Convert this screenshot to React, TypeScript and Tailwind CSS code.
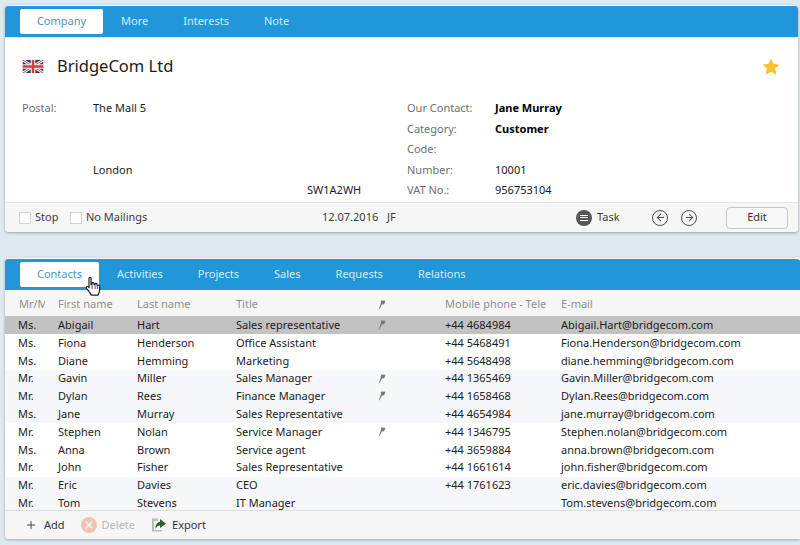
import { ArrowLeft, ArrowRight, Plus, X } from "lucide-react";

const contacts = [
  ["Ms.", "Abigail", "Hart", "Sales representative", true, "+44 4684984", "Abigail.Hart@bridgecom.com"],
  ["Ms.", "Fiona", "Henderson", "Office Assistant", false, "+44 5468491", "Fiona.Henderson@bridgecom.com"],
  ["Ms.", "Diane", "Hemming", "Marketing", false, "+44 5648498", "diane.hemming@bridgecom.com"],
  ["Mr.", "Gavin", "Miller", "Sales Manager", true, "+44 1365469", "Gavin.Miller@bridgecom.com"],
  ["Mr.", "Dylan", "Rees", "Finance Manager", true, "+44 1658468", "Dylan.Rees@bridgecom.com"],
  ["Ms.", "Jane", "Murray", "Sales Representative", false, "+44 4654984", "jane.murray@bridgecom.com"],
  ["Mr.", "Stephen", "Nolan", "Service Manager", true, "+44 1346795", "Stephen.nolan@bridgecom.com"],
  ["Ms.", "Anna", "Brown", "Service agent", false, "+44 3659884", "anna.brown@bridgecom.com"],
  ["Mr.", "John", "Fisher", "Sales Representative", false, "+44 1661614", "john.fisher@bridgecom.com"],
  ["Mr.", "Eric", "Davies", "CEO", false, "+44 1761623", "eric.davies@bridgecom.com"],
  ["Mr.", "Tom", "Stevens", "IT Manager", false, "", "Tom.stevens@bridgecom.com"],
] as const;

const PinIcon = () => (
  <svg viewBox="0 0 8 10" className="h-[10px] w-2">
    <path d="M3.2 0.5 L7.5 0.8 L6.2 4.2 L4 4.6 L1.2 9.5 L0.8 9.2 L2.6 4 Z" fill="#77797b" />
  </svg>
);

const Flag = () => (
  <svg viewBox="0 0 22 14" className="h-[13px] w-[22px]">
    <rect width="22" height="14" fill="#2b3a67" />
    <path d="M0 0 L22 14 M22 0 L0 14" stroke="#e8e8ee" strokeWidth="3" />
    <path d="M0 0 L22 14 M22 0 L0 14" stroke="#d8485a" strokeWidth="1" />
    <path d="M11 0 V14 M0 7 H22" stroke="#f2f2f5" strokeWidth="5" />
    <path d="M11 0 V14 M0 7 H22" stroke="#e2382f" strokeWidth="2.6" />
  </svg>
);

const Star = () => (
  <svg viewBox="0 0 16 16" className="h-4 w-4">
    <path
      d="M8 0.6 L10.2 5.4 L15.6 6 L11.6 9.5 L12.8 15 L8 12.2 L3.2 15 L4.4 9.5 L0.4 6 L5.8 5.4 Z"
      fill="#fbc02d"
      stroke="#fbc02d"
      strokeLinejoin="round"
    />
  </svg>
);

const Tabs = ({ items, activeWidth }: { items: string[]; activeWidth: number }) => (
  <div className="flex h-[31px] items-center rounded-t-[3px] bg-[#2196d8] pl-[15px]">
    <div
      className="mr-[18px] flex h-[25px] items-center justify-center rounded-[2px] bg-white text-[#4d96c0]"
      style={{ width: activeWidth }}
    >
      {items[0]}
    </div>
    <div className="flex gap-[35px]">
      {items.slice(1).map((item) => (
        <span key={item} className="text-[#d6ecf8]">
          {item}
        </span>
      ))}
    </div>
  </div>
);

const Field = ({ label, value, bold }: { label: string; value?: string; bold?: boolean }) => (
  <div className="flex h-[20.5px] items-center">
    <span className="w-[88px] text-[#6f6f6f]">{label}</span>
    <span className={bold ? "font-bold text-black" : "text-[#1c1c1c]"}>{value}</span>
  </div>
);

const Checkbox = ({ label, width }: { label: string; width: number }) => (
  <div className="flex items-center gap-[4px]" style={{ width }}>
    <span className="h-[12px] w-[12px] border border-[#d4d4d4] bg-white" />
    <span>{label}</span>
  </div>
);

const HandCursor = () => (
  <svg viewBox="0 0 16 20" className="absolute left-[80px] top-[18px] h-[21px] w-4">
    <path
      d="M4 1.8 C4 0.6 6 0.6 6 1.8 V8 L7 8 V6.8 C7 6 9 6 9 6.8 V8 L10 8.2 V7.4 C10 6.7 12 6.7 12 7.6 V8.6 L12.6 8.8 C13.3 8.4 14.6 8.8 14.6 9.8 V13.4 C14.6 15.4 13.6 16.4 13.2 18.6 H6.2 C5.6 16.6 3.6 14.6 1.6 12 C0.6 10.6 2 9.4 3.2 10.4 L4 11.2 Z"
      fill="white"
      stroke="#222"
      strokeWidth="1.2"
      strokeLinejoin="round"
    />
    <path d="M7 8.5 V12.5 M10 8.5 V12.5 M12.4 9 V12.5" stroke="#222" strokeWidth="0.8" />
  </svg>
);

const App = () => (
  <div
    className="flex h-[545px] w-[800px] flex-col overflow-hidden bg-[#dfe9f0] pl-[5px] pt-[5px] text-[11px] text-[#1c1c1c]"
    style={{ fontFamily: '"Noto Sans", sans-serif' }}
  >
    <div className="h-[227px] w-[793px] shrink-0 overflow-hidden rounded-[4px] bg-white pt-px shadow-[0_1px_3px_rgba(90,110,130,0.55)]">
      <Tabs items={["Company", "More", "Interests", "Note"]} activeWidth={83} />
      <div className="flex h-[165px] flex-col border-t border-[#dfe5ea]">
        <div className="flex h-[59px] items-center pb-[2px] pl-[17px] pr-[19px]">
          <Flag />
          <span className="ml-[13px] flex-1 pb-px text-[16.5px] text-[#1a1a1a]">BridgeCom Ltd</span>
          <Star />
        </div>
        <div className="flex pl-[17px] pt-[1px]">
          <div className="flex w-[385px] flex-col">
            <div className="flex h-[20.5px] items-center">
              <span className="w-[71px] text-[#6f6f6f]">Postal:</span>
              <span>The Mall 5</span>
            </div>
            <div className="h-[41px]" />
            <div className="flex h-[20.5px] items-center pl-[71px]">London</div>
            <div className="flex h-[20.5px] items-center pl-[285px]">SW1A2WH</div>
          </div>
          <div className="flex flex-col">
            <Field label="Our Contact:" value="Jane Murray" bold />
            <Field label="Category:" value="Customer" bold />
            <Field label="Code:" />
            <Field label="Number:" value="10001" />
            <Field label="VAT No.:" value="956753104" />
          </div>
        </div>
      </div>
      <div className="flex h-[30px] items-center border-t border-[#e6e6e6] bg-[#f6f6f6] pl-[14px] text-[#3c3c3c]">
        <Checkbox label="Stop" width={51} />
        <Checkbox label="No Mailings" width={252} />
        <span className="w-[65px]">12.07.2016</span>
        <span className="w-[189px]">JF</span>
        <span className="flex h-4 w-4 flex-col items-center justify-center gap-[1.5px] rounded-full bg-[#56565a]">
          <span className="h-px w-2 bg-white" />
          <span className="h-px w-2 bg-white" />
          <span className="h-px w-2 bg-white" />
        </span>
        <span className="ml-[5px] w-[55px]">Task</span>
        <span className="flex h-4 w-4 items-center justify-center rounded-full border-[1.5px] border-[#505050]">
          <ArrowLeft size={11} strokeWidth={2.2} color="#505050" />
        </span>
        <span className="ml-[13px] flex h-4 w-4 items-center justify-center rounded-full border-[1.5px] border-[#505050]">
          <ArrowRight size={11} strokeWidth={2.2} color="#505050" />
        </span>
        <button className="ml-[29px] h-[22px] w-[62px] rounded-[4px] border border-[#c8c8c8] bg-[#f8f8f8] text-[11px] text-[#333]">
          Edit
        </button>
      </div>
    </div>

    <div className="relative mt-[26px] h-[281px] w-[795px] shrink-0 overflow-hidden rounded-l-[4px] bg-white pt-px shadow-[0_1px_3px_rgba(90,110,130,0.55)]">
      <Tabs items={["Contacts", "Activities", "Projects", "Sales", "Requests", "Relations"]} activeWidth={79} />
      <div className="grid h-[26.4px] grid-cols-[39px_79px_99px_142px_67px_116px_1fr] items-center bg-[#f6f6f6] pl-[14px] pt-[3px] text-[#8f8f8f]">
        <span className="w-[26px] overflow-hidden whitespace-nowrap">Mr/Ms</span>
        <span>First name</span>
        <span>Last name</span>
        <span>Title</span>
        <span>
          <PinIcon />
        </span>
        <span className="w-[101px] overflow-hidden whitespace-nowrap">Mobile phone - Telephone</span>
        <span>E-mail</span>
      </div>
      <div className="h-[193.6px] overflow-hidden">
        {contacts.map((row, i) => (
          <div
            key={row[6]}
            className={`grid h-[17.8px] grid-cols-[40px_79px_99px_142px_67px_116px_1fr] items-center whitespace-nowrap pl-[13px] ${
              i === 0 ? "bg-[#c2c2c2]" : Math.floor(i / 3) % 2 === 1 ? "bg-[#f6f7fa]" : "bg-white"
            }`}
          >
            <span>{row[0]}</span>
            <span>{row[1]}</span>
            <span>{row[2]}</span>
            <span>{row[3]}</span>
            <span>{row[4] && <PinIcon />}</span>
            <span>{row[5]}</span>
            <span>{row[6]}</span>
          </div>
        ))}
      </div>
      <div className="flex h-[29px] items-center border-t border-[#dedede] bg-[#f6f6f6] pl-[20px] text-[#333]">
        <Plus size={12} strokeWidth={2} color="#444" />
        <span className="ml-[7px]">Add</span>
        <span className="ml-[16px] flex h-4 w-4 items-center justify-center rounded-full bg-[#edc4b6]">
          <X size={12} strokeWidth={3} color="#f8f3f0" />
        </span>
        <span className="ml-[5px] text-[#b9b9b9]">Delete</span>
        <svg viewBox="0 0 16 16" className="ml-[16px] h-4 w-4">
          <path d="M1 1.5 H7 V4 H3 V13 H11 V14.5 H1 Z" fill="#b9b9b9" />
          <path d="M9 2 L15 6.8 L9 11 V8.5 C7 8.5 5.5 9.5 4.5 12 C4.5 8 6 5 9 4.8 Z" fill="#355c2c" />
        </svg>
        <span className="ml-[5px]">Export</span>
      </div>
      <HandCursor />
    </div>
  </div>
);

export default App;
